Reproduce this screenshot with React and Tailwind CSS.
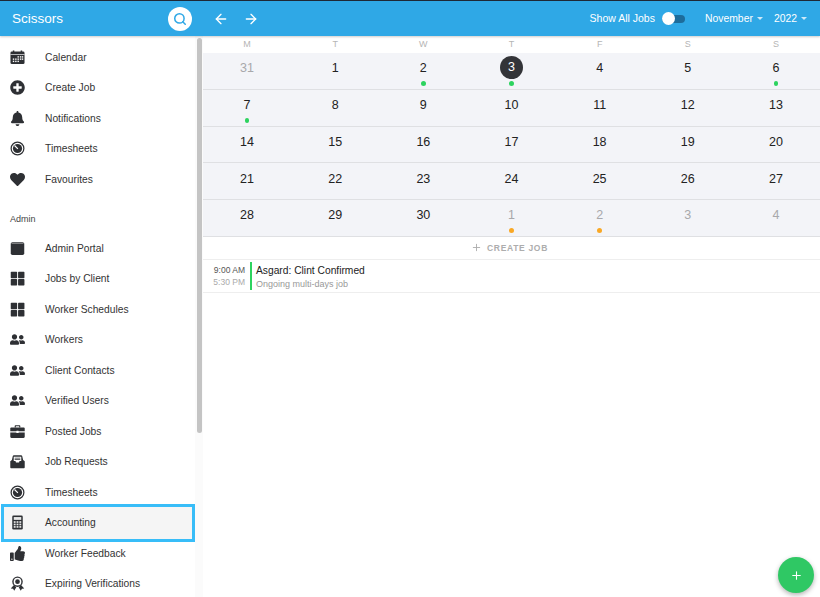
import React from "react";
import { FaPlusCircle, FaBell, FaHeart, FaUserFriends, FaThumbsUp } from "react-icons/fa";
import { Search, ArrowLeft, ArrowRight, Plus } from "lucide-react";

const C = "#2e3034";
const Svg = ({ children }) => (
  <svg viewBox="0 0 16 16" width="15" height="15" fill={C}>{children}</svg>
);
const CalendarIcon = () => (
  <Svg>
    <rect x="3" y="0.5" width="1.6" height="2.5" />
    <rect x="11.4" y="0.5" width="1.6" height="2.5" />
    <rect x="0.5" y="1.6" width="15" height="13.4" rx="1.5" />
    <rect x="0.5" y="4.4" width="15" height="0.7" fill="#fff" />
    {[[3, 9], [5.5, 9], [8, 9], [3, 11.4], [5.5, 11.4], [8, 11.4], [10.5, 6.6], [12.6, 6.6], [10.5, 9], [12.6, 9], [8, 6.6]].map(([x, y]) => (
      <rect key={`${x}-${y}`} x={x} y={y} width="1.5" height="1.5" fill="#fff" />
    ))}
  </Svg>
);
const TimeIcon = () => (
  <Svg>
    <circle cx="8" cy="8" r="6.8" fill="none" stroke={C} strokeWidth="1.3" />
    <circle cx="8" cy="8" r="4.9" />
    <path d="M4.8 4.8 L8.4 8.4" stroke="#fff" strokeWidth="1.2" />
  </Svg>
);
const PortalIcon = () => (
  <Svg>
    <rect x="0.8" y="1.2" width="14.4" height="13.6" rx="1.8" />
    <rect x="1.6" y="2.4" width="12.8" height="0.6" fill="#b9babc" />
  </Svg>
);
const GridIcon = () => (
  <Svg>
    <rect x="0.8" y="0.8" width="6.8" height="6.8" rx="0.7" />
    <rect x="8.6" y="0.8" width="6.8" height="6.8" rx="0.7" />
    <rect x="0.8" y="8.6" width="6.8" height="6.8" rx="0.7" />
    <rect x="8.6" y="8.6" width="6.8" height="6.8" rx="0.7" />
  </Svg>
);
const BriefcaseIcon = () => (
  <Svg>
    <path d="M5 3.6V2.2C5 1.6 5.5 1.2 6 1.2h4c.5 0 1 .4 1 1v1.4H9.8V2.4H6.2v1.2z" />
    <path d="M0.3 4.8c0-.7.5-1.2 1.2-1.2h13c.7 0 1.2.5 1.2 1.2v3H0.3z" />
    <path d="M0.3 9h15.4v4.6c0 .7-.5 1.2-1.2 1.2h-13c-.7 0-1.2-.5-1.2-1.2z" />
    <rect x="6.8" y="7.2" width="2.4" height="2.4" rx="0.3" fill="#fff" />
  </Svg>
);
const InboxIcon = () => (
  <Svg>
    <path d="M2 6.5 3 2.2C3.1 1.6 3.6 1.2 4.2 1.2h7.6c.6 0 1.1.4 1.2 1l1 4.3 1.7 1.2V14c0 .7-.5 1.2-1.2 1.2H1.5C.8 15.2.3 14.7.3 14V7.7z" />
    <path d="M4 7.4V3h8v4.4H10.2L9.6 9H6.4L5.8 7.4z" fill="#fff" />
    <rect x="5" y="4" width="6" height="0.8" />
    <rect x="5" y="5.6" width="6" height="0.8" />
  </Svg>
);
const CalcIcon = () => (
  <Svg>
    <rect x="2.4" y="0.6" width="11.2" height="14.8" rx="1.4" />
    <rect x="4" y="2.2" width="8" height="3" fill="#e8e8e8" />
    {[4, 7, 10].flatMap((x) => [6.6, 9.2, 11.8].map((y) => (
      <rect key={`${x}-${y}`} x={x} y={y} width="2" height="1.8" fill="#e8e8e8" />
    )))}
  </Svg>
);
const AwardIcon = () => (
  <Svg>
    <path d="M4.2 9.5 0.8 13.4l2.5.1 1.2 2.2 2.2-3.6zM11.8 9.5l3.4 3.9-2.5.1-1.2 2.2-2.2-3.6z" />
    <circle cx="8" cy="6" r="5.6" />
    <circle cx="8" cy="6" r="4.1" fill="#fff" />
    <circle cx="8" cy="6" r="2.5" />
  </Svg>
);
const Fa = (I, size = 14) => () => <I size={size} color={C} />;

const top = [
  [CalendarIcon, "Calendar"],
  [Fa(FaPlusCircle, 15), "Create Job"],
  [Fa(FaBell, 15), "Notifications"],
  [TimeIcon, "Timesheets"],
  [Fa(FaHeart, 15), "Favourites"],
];
const admin = [
  [PortalIcon, "Admin Portal"],
  [GridIcon, "Jobs by Client"],
  [GridIcon, "Worker Schedules"],
  [Fa(FaUserFriends, 15), "Workers"],
  [Fa(FaUserFriends, 15), "Client Contacts"],
  [Fa(FaUserFriends, 15), "Verified Users"],
  [BriefcaseIcon, "Posted Jobs"],
  [InboxIcon, "Job Requests"],
  [TimeIcon, "Timesheets"],
  [CalcIcon, "Accounting", true],
  [Fa(FaThumbsUp, 15), "Worker Feedback"],
  [AwardIcon, "Expiring Verifications"],
];
const days = ["M", "T", "W", "T", "F", "S", "S"];
const weeks = [
  [[31, 1], [1], [2, 0, "g"], [3, 0, "g", 1], [4], [5], [6, 0, "g"]],
  [[7, 0, "g"], [8], [9], [10], [11], [12], [13]],
  [[14], [15], [16], [17], [18], [19], [20]],
  [[21], [22], [23], [24], [25], [26], [27]],
  [[28], [29], [30], [1, 1, "o"], [2, 1, "o"], [3, 1], [4, 1]],
];

function Item({ icon: Icon, label, active }) {
  return (
    <div className="relative flex h-[30.5px] shrink-0 items-center pl-[10px] text-[10.25px] text-[#333]">
      {active && <div className="absolute -inset-y-[4px] left-[1px] right-0 border-[3px] border-[#38bdf8] bg-[#f5f5f5]" />}
      <span className="relative flex w-[15px] justify-center">
        <Icon />
      </span>
      <span className="relative ml-[20px] whitespace-nowrap">{label}</span>
    </div>
  );
}

export default function App() {
  return (
    <div className="relative flex h-[597px] w-[820px] flex-col overflow-hidden bg-white font-['Liberation_Sans',Arial,sans-serif]">
      <div className="h-[1px] shrink-0 bg-[#1f2937]" />
      <header className="z-10 flex h-[35px] shrink-0 items-center bg-[#2fa8e6] text-white shadow-[0_1px_2px_rgba(0,0,0,0.2)]">
        <div className="flex w-[203px] items-center justify-between pl-[12px] pr-[11px]">
          <span className="pt-[2px] text-[13.5px]">Scissors</span>
          <span className="flex h-[24px] w-[24px] items-center justify-center rounded-full bg-white">
            <Search size={14} strokeWidth={2.6} className="text-[#2fa8e6]" />
          </span>
        </div>
        <div className="flex flex-1 items-center pl-[10px] pr-[13px]">
          <ArrowLeft size={16} strokeWidth={2} />
          <ArrowRight size={16} strokeWidth={2} className="ml-[14px]" />
          <span className="ml-auto text-[10.5px]">Show All Jobs</span>
          <span className="relative ml-[7px] h-[8px] w-[23px] rounded-full bg-[#1d6c9b]">
            <span className="absolute left-0 -top-[3px] h-[13px] w-[13px] rounded-full bg-white" />
          </span>
          <span className="ml-[20px] text-[10.4px]">November</span>
          <span className="ml-[4px] h-0 w-0 border-x-[3px] border-t-[3px] border-x-transparent border-t-[#cfe9f8]" />
          <span className="ml-[11px] text-[10.4px]">2022</span>
          <span className="ml-[4px] h-0 w-0 border-x-[3px] border-t-[3px] border-x-transparent border-t-[#cfe9f8]" />
        </div>
      </header>
      <div className="flex min-h-0 flex-1">
        <aside className="flex w-[195px] shrink-0 flex-col overflow-hidden pt-[6px]">
          {top.map(([I, l]) => <Item key={l} icon={I} label={l} />)}
          <div className="flex h-[38.5px] shrink-0 items-end pb-[7px] pl-[10px] text-[9px] text-[#444]">Admin</div>
          {admin.map(([I, l], idx) => <Item key={idx} icon={I} label={l} active={admin[idx][2]} />)}
        </aside>
        <div className="flex w-[8px] shrink-0 justify-center bg-[#fbfbfb] pt-[2px]">
          <div className="h-[395px] w-[5px] rounded-full bg-[#c4c4c4]" />
        </div>
        <main className="relative min-w-0 flex-1">
          <div className="grid h-[17px] grid-cols-7 items-center text-center text-[9px] text-[#b5b5b5]">
            {days.map((d, i) => <span key={i}>{d}</span>)}
          </div>
          {weeks.map((w, i) => (
            <div key={i} className="grid h-[36.8px] grid-cols-7 border-b border-[#dfe0e3] bg-[#f3f4f8]">
              {w.map(([n, muted, dot, today], j) => (
                <div key={j} className="relative flex justify-center pt-[4px]">
                  <span className={`flex h-[23px] w-[23px] items-center justify-center rounded-full text-[12.5px] ${today ? "-mt-[1px] bg-[#333438] text-white" : muted ? "text-[#a8a8ab]" : "text-[#222]"}`}>{n}</span>
                  {dot && <span className={`absolute bottom-[3px] h-[4.5px] w-[4.5px] rounded-full ${dot === "g" ? "bg-[#2dd35f]" : "bg-[#f9a825]"}`} />}
                </div>
              ))}
            </div>
          ))}
          <div className="flex h-[23px] items-center justify-center border-b border-[#eeeeee] pr-[4px] text-[8.5px] font-bold tracking-[0.08em] text-[#adadad]">
            <Plus size={11} className="mr-[5px]" />
            CREATE JOB
          </div>
          <div className="flex h-[33px] items-stretch border-b border-[#eeeeee] py-[2px]">
            <div className="flex w-[47px] flex-col items-end justify-center gap-[1px] pr-[5px] pt-[1px] text-[8.5px] leading-[11px]">
              <span className="text-[#555]">9:00 AM</span>
              <span className="text-[#aaa]">5:30 PM</span>
            </div>
            <div className="w-[2px] bg-[#2dd35f]" />
            <div className="flex flex-col pl-[4px]">
              <span className="pt-[1px] text-[10.25px] leading-[15px] text-[#222]">Asgard: Clint Confirmed</span>
              <span className="text-[9px] leading-[12px] text-[#999]">Ongoing multi-days job</span>
            </div>
          </div>
          <button className="absolute bottom-[4px] right-[6px] flex h-[36px] w-[36px] items-center justify-center rounded-full bg-[#2fc864] text-white shadow-[0_2px_5px_rgba(0,0,0,0.3)]">
            <Plus size={13} />
          </button>
        </main>
      </div>
    </div>
  );
}
